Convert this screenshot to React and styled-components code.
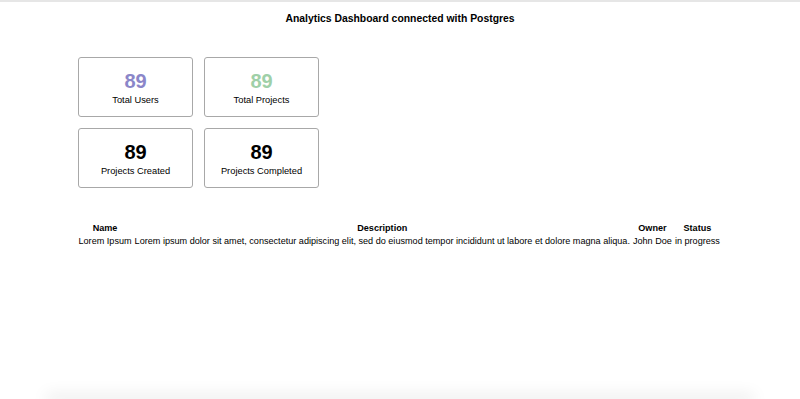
import React from 'react';
import styled, { createGlobalStyle } from 'styled-components';

const GlobalStyle = createGlobalStyle`
    html, body {
        margin: 0;
        padding: 0;
        background: white;
        font-family: "Liberation Sans", Arial, sans-serif;
        color: black;
    }
`;

const Page = styled.div`
    border-top: 2px solid #e6e6e6;
    min-height: 399px;
    padding: 0 78px;
    box-sizing: border-box;
`;

const Title = styled.h1`
    margin: 0;
    padding-top: 10px;
    text-align: center;
    font-size: 10.4px;
    font-weight: 700;
    line-height: 13px;
`;

const Grid = styled.div`
    display: grid;
    grid-template-columns: repeat(2, 115px);
    grid-auto-rows: 60px;
    gap: 11px;
    margin-top: 32px;
`;

const Card = styled.div`
    border: 1.5px solid #a8a8a8;
    border-radius: 3px;
    box-sizing: border-box;
    display: flex;
    flex-direction: column;
    align-items: center;
    justify-content: center;
`;

const Value = styled.div`
    font-size: 20px;
    font-weight: 700;
    line-height: 20px;
    margin-top: 1px;
    color: ${props => props.color || 'black'};
`;

const Label = styled.div`
    font-size: 9.3px;
    margin-top: 4px;
`;

const Table = styled.table`
    margin-top: 34px;
    margin-left: -1px;
    border-collapse: separate;
    border-spacing: 0;
    font-size: 9.1px;
    white-space: nowrap;
`;

const Th = styled.th`
    font-weight: 700;
    padding: 0 1.5px;
    line-height: 13px;
`;

const Td = styled.td`
    padding: 0 1.5px;
    line-height: 13px;
`;

const Shadow = styled.div`
    height: 0;
    margin: 0 50px;
    box-shadow: 0 0 16px 4px rgba(0,0,0,0.1);
`;

const stats = [
    { value: 89, label: 'Total Users', color: '#8b86c9' },
    { value: 89, label: 'Total Projects', color: '#9fd0a8' },
    { value: 89, label: 'Projects Created' },
    { value: 89, label: 'Projects Completed' },
];

const projects = [
    {
        name: 'Lorem Ipsum',
        description: 'Lorem ipsum dolor sit amet, consectetur adipiscing elit, sed do eiusmod tempor incididunt ut labore et dolore magna aliqua.',
        owner: 'John Doe',
        status: 'in progress',
    },
];

function App() {
  return (
    <>
        <GlobalStyle />
        <Page>
            <Title>Analytics Dashboard connected with Postgres</Title>
            <Grid>
                {stats.map(s => (
                    <Card key={s.label}>
                        <Value color={s.color}>{s.value}</Value>
                        <Label>{s.label}</Label>
                    </Card>
                ))}
            </Grid>
            <Table>
                <thead>
                    <tr>
                        <Th>Name</Th>
                        <Th>Description</Th>
                        <Th>Owner</Th>
                        <Th>Status</Th>
                    </tr>
                </thead>
                <tbody>
                    {projects.map(p => (
                        <tr key={p.name}>
                            <Td>{p.name}</Td>
                            <Td>{p.description}</Td>
                            <Td>{p.owner}</Td>
                            <Td>{p.status}</Td>
                        </tr>
                    ))}
                </tbody>
            </Table>
        </Page>
        <Shadow />
    </>
  )
}

export default App
